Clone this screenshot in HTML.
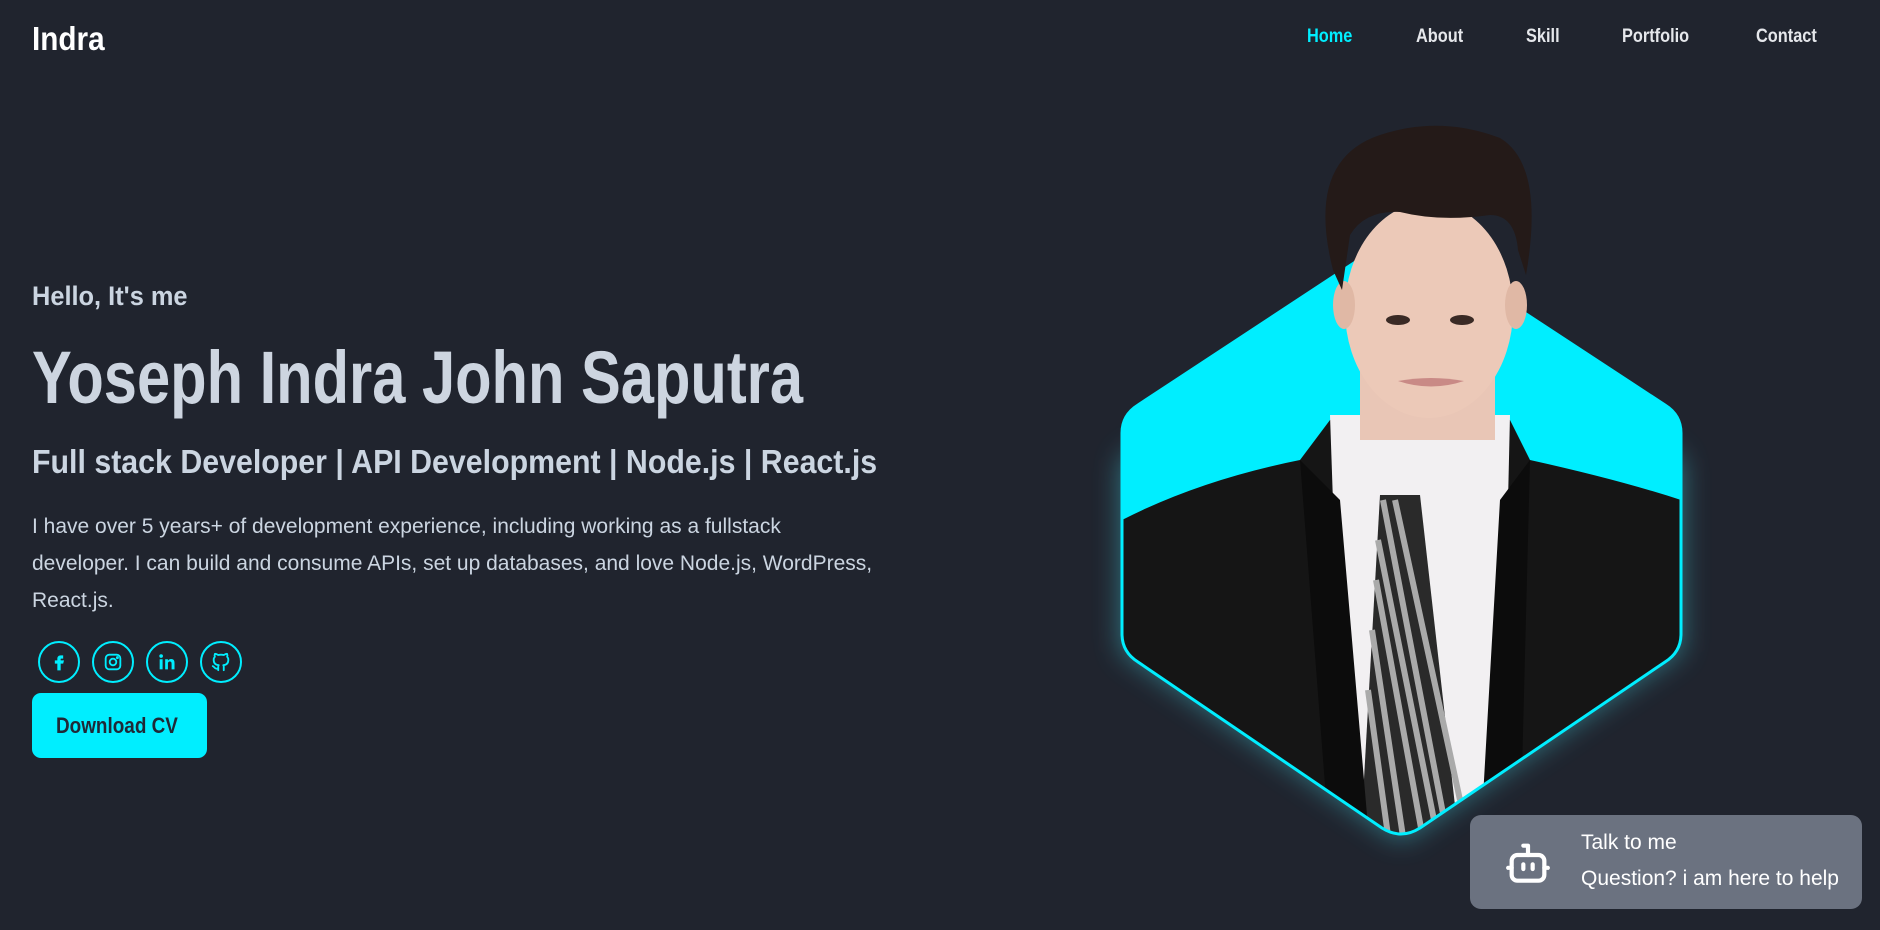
<!DOCTYPE html>
<html><head><meta charset="utf-8"><style>
*{margin:0;padding:0;box-sizing:border-box}
body{width:1880px;height:930px;background:#20242e;font-family:"Liberation Sans",sans-serif;overflow:hidden;position:relative;color:#cbd5e1}
.sx{position:absolute;white-space:nowrap;transform-origin:left center;transform:scaleX(.86)}
.logo{left:32px;top:20px;font-size:33px;font-weight:bold;color:#fff;transform:scaleX(.9)}
.nav{top:26px;font-size:19px;font-weight:bold;color:#e5e7eb}
.hello{left:32px;top:281px;font-size:27px;font-weight:bold;transform:scaleX(.94)}
.title{left:32px;top:335px;font-size:74px;font-weight:bold;color:#cdd5e0;transform:scaleX(.806)}
.sub{left:32px;top:443px;font-size:33px;font-weight:bold;transform:scaleX(.919)}
.p{left:32px;font-size:21px;color:#cbd5e1;transform:none}
.ic{position:absolute;top:641px;width:42px;height:42px;border:2.5px solid #00eeff;border-radius:50%;display:flex;align-items:center;justify-content:center}
.btn{position:absolute;left:32px;top:693px;width:175px;height:65px;background:#00eeff;border-radius:9px}
.btn span{position:absolute;left:24px;top:20px;font-size:22px;font-weight:bold;color:#1f2937;white-space:nowrap;transform:scaleX(.86);transform-origin:left center}
.chat{position:absolute;left:1470px;top:815px;width:392px;height:94px;background:#6b7280;border-radius:11px}
.chat .t{position:absolute;left:111px;font-size:21px;color:#fff;white-space:nowrap}
</style></head><body>
<div class="sx logo">Indra</div>
<div class="sx nav" style="left:1307px;color:#00eeff">Home</div>
<div class="sx nav" style="left:1416px">About</div>
<div class="sx nav" style="left:1526px">Skill</div>
<div class="sx nav" style="left:1622px">Portfolio</div>
<div class="sx nav" style="left:1756px">Contact</div>

<div class="sx hello">Hello, It's me</div>
<div class="sx title">Yoseph Indra John Saputra</div>
<div class="sx sub">Full stack Developer | API Development | Node.js | React.js</div>
<div class="sx p" style="top:515px">I have over 5 years+ of development experience, including working as a fullstack</div>
<div class="sx p" style="top:552px">developer. I can build and consume APIs, set up databases, and love Node.js, WordPress,</div>
<div class="sx p" style="top:589px">React.js.</div>

<div class="ic" style="left:38px"><svg width="20" height="20" viewBox="0 0 24 24"><path d="M14 8h3V4h-3c-2.5 0-4 1.7-4 4v2H7v4h3v8h4v-8h3l1-4h-4V8.5c0-.3.2-.5.5-.5z" fill="#00eeff"/></svg></div>
<div class="ic" style="left:92px"><svg width="22" height="22" viewBox="0 0 24 24" fill="none" stroke="#00eeff" stroke-width="2"><rect x="4" y="4" width="16" height="16" rx="4"/><circle cx="12" cy="12" r="3.6"/><circle cx="16.8" cy="7.2" r=".6" fill="#00eeff"/></svg></div>
<div class="ic" style="left:146px"><svg width="22" height="22" viewBox="0 0 24 24" fill="#00eeff"><rect x="4" y="9" width="3.2" height="11"/><circle cx="5.6" cy="5.5" r="2"/><path d="M10 9h3v1.6c.6-1 1.8-1.9 3.6-1.9 3 0 3.6 2 3.6 4.6V20h-3.2v-5.8c0-1.4-.2-2.7-1.9-2.7s-2.1 1.2-2.1 2.6V20H10z"/></svg></div>
<div class="ic" style="left:200px"><svg width="22" height="22" viewBox="0 0 24 24" fill="none" stroke="#00eeff" stroke-width="2" stroke-linecap="round" stroke-linejoin="round"><path d="M9 19c-4 1.3-4-2-6-2.5M15 21v-3.5c0-1 .1-1.4-.5-2 2.8-.3 5.5-1.4 5.5-6a4.6 4.6 0 0 0-1.3-3.2 4.2 4.2 0 0 0-.1-3.2s-1.1-.3-3.5 1.3a12 12 0 0 0-6.2 0C6.5 2.8 5.4 3.1 5.4 3.1a4.2 4.2 0 0 0-.1 3.2A4.6 4.6 0 0 0 4 9.5c0 4.6 2.7 5.7 5.5 6-.6.6-.6 1.2-.5 2V21"/></svg></div>
<div class="btn"><span>Download CV</span></div>

<svg style="position:absolute;left:0;top:0" width="1880" height="930">
<defs>
<clipPath id="hx"><path d="M1401 232 L1665 405 Q1681 415 1681 433 L1681 634 Q1681 652 1665 662 L1420 828 Q1401 840 1382 828 L1138 662 Q1122 652 1122 634 L1122 433 Q1122 415 1138 405 Z"/></clipPath>
<filter id="gl" x="-20%" y="-20%" width="140%" height="140%"><feGaussianBlur stdDeviation="14"/></filter>
</defs>
<path d="M1401 300 L1681 460 L1681 650 L1401 840 L1122 650 L1122 460 Z" fill="#40c8d8" opacity=".55" filter="url(#gl)"/>
<g clip-path="url(#hx)">
<rect x="1100" y="220" width="600" height="630" fill="#00eeff"/>
<path d="M1122 520 Q1200 480 1300 460 L1330 420 L1510 420 L1530 460 Q1620 480 1681 500 L1681 850 L1122 850 Z" fill="#151515"/>
<path d="M1330 415 L1510 415 L1500 850 L1345 850 Z" fill="#f2f0f2"/>
<path d="M1380 495 L1420 495 L1460 850 L1360 850 Z" fill="#2a2a2a"/>
<path d="M1383 500 L1450 850 M1378 540 L1440 850 M1376 580 L1425 850 M1372 630 L1405 850 M1368 690 L1390 850 M1395 500 L1460 800" stroke="#aaa" stroke-width="6"/>
<path d="M1300 460 L1340 500 L1370 850 L1330 850 Z M1530 460 L1500 500 L1480 850 L1520 850Z" fill="#0c0c0c"/>
</g>
<path d="M1401 232 L1665 405 Q1681 415 1681 433 L1681 634 Q1681 652 1665 662 L1420 828 Q1401 840 1382 828 L1138 662 Q1122 652 1122 634 L1122 433 Q1122 415 1138 405 Z" fill="none" stroke="#00eeff" stroke-width="3"/>
<rect x="1360" y="360" width="135" height="80" fill="#e9c6b6"/>
<ellipse cx="1429" cy="310" rx="84" ry="108" fill="#ecc9b8"/>
<ellipse cx="1344" cy="305" rx="11" ry="24" fill="#e0b8a5"/>
<ellipse cx="1516" cy="305" rx="11" ry="24" fill="#e0b8a5"/>
<path d="M1333 270 Q1305 160 1380 135 Q1440 115 1500 138 Q1545 165 1526 275 L1518 250 Q1515 215 1490 215 Q1440 222 1400 212 Q1365 210 1350 235 L1342 290 Z" fill="#241a18"/>
<path d="M1398 381 Q1431 392 1464 381 Q1431 375 1398 381Z" fill="#c98a86"/>
<ellipse cx="1398" cy="320" rx="12" ry="5" fill="#3a2a25"/><ellipse cx="1462" cy="320" rx="12" ry="5" fill="#3a2a25"/>
</svg>

<div class="chat">
<svg style="position:absolute;left:30px;top:19px" width="56" height="56" viewBox="0 0 24 24" fill="none" stroke="#fff" stroke-width="1.8" stroke-linecap="round" stroke-linejoin="round"><rect x="5" y="9" width="14" height="11" rx="2.5"/><path d="M12 9V5H10M3.5 14.5h1.5M19 14.5h1.5M10 13v2M14 13v2"/></svg>
<div class="t" style="top:16px">Talk to me</div>
<div class="t" style="top:52px">Question? i am here to help</div>
</div>
</body></html>
